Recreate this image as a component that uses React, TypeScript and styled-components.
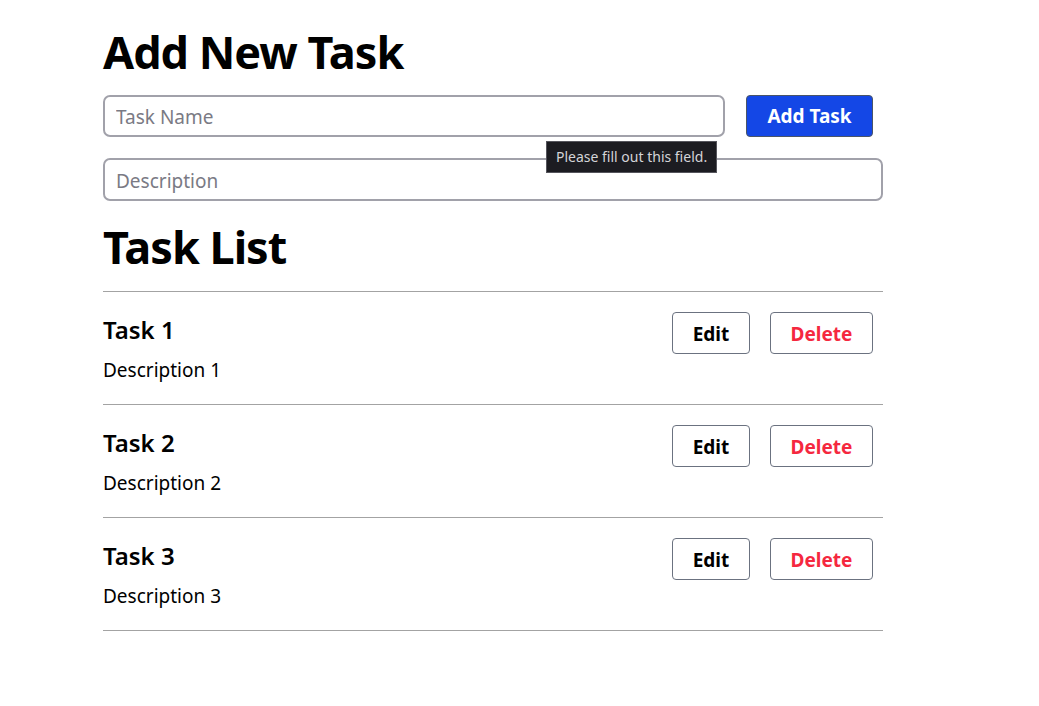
import React from "react";
import styled, { createGlobalStyle } from "styled-components";

const Global = createGlobalStyle`
  html, body { margin: 0; padding: 0; background: #fff; }
  body { font-family: "Noto Sans", "Open Sans", sans-serif; color: #000; }
  * { box-sizing: border-box; }
`;

const Page = styled.div`
  padding: 20px 0 0 103px;
`;

const Container = styled.div`
  width: 780px;
`;

const Heading = styled.h1`
  margin: 0;
  font-size: 45px;
  font-weight: 700;
  letter-spacing: -1px;
  line-height: 64px;
`;

const Form = styled.form`
  display: flex;
  flex-direction: column;
  gap: 21px;
  margin-top: 11px;
  position: relative;
`;

const Row = styled.div`
  display: flex;
  align-items: center;
  gap: 21px;
`;

const Input = styled.input<{ $full?: boolean }>`
  height: ${(p) => (p.$full ? 43 : 42)}px;
  width: ${(p) => (p.$full ? "780px" : "622px")};
  border: 2px solid #a1a1aa;
  border-radius: 7px;
  padding: 2px 11px 0 11px;
  font-family: inherit;
  font-size: 19px;
  color: #000;
  outline: none;
  &::placeholder { color: #7a7a84; }
`;

const PrimaryButton = styled.button`
  height: 42px;
  width: 127px;
  background: #1447e6;
  color: #fff;
  border: 1px solid #4a5568;
  border-radius: 4px;
  font-family: inherit;
  font-size: 19px;
  font-weight: 700;
  cursor: pointer;
`;

const Bubble = styled.div`
  position: absolute;
  left: 443px;
  top: 46px;
  background: #1c1c21;
  color: #d4d4d8;
  border: 1px solid #55555c;
  font-size: 14px;
  padding: 5px 9px 6px 9px;
  white-space: nowrap;
`;

const ListHeading = styled(Heading)`
  margin-top: 14px;
`;

const List = styled.ul`
  list-style: none;
  margin: 12px 0 0 0;
  padding: 0;
  border-top: 1px solid #a3a3a3;
`;

const Item = styled.li`
  display: flex;
  justify-content: space-between;
  align-items: flex-start;
  height: 113px;
  padding: 20px 10px 0 0;
  border-bottom: 1px solid #a3a3a3;
`;

const Info = styled.div`
  display: flex;
  flex-direction: column;
`;

const Title = styled.h3`
  margin: 3px 0 0 0;
  font-size: 24px;
  font-weight: 600;
  line-height: 30px;
`;

const Desc = styled.p`
  margin: 13px 0 0 0;
  font-size: 19px;
  line-height: 24px;
`;

const Actions = styled.div`
  display: flex;
  gap: 20px;
`;

const ActionButton = styled.button<{ $danger?: boolean }>`
  height: 42px;
  width: ${(p) => (p.$danger ? 103 : 78)}px;
  padding: 2px 0 0 0;
  background: #fff;
  color: ${(p) => (p.$danger ? "#f5283f" : "#000")};
  border: 1px solid #6b7280;
  border-radius: 4px;
  font-family: inherit;
  font-size: 19px;
  font-weight: 700;
  cursor: pointer;
`;

const tasks = [
  { id: 1, name: "Task 1", desc: "Description 1" },
  { id: 2, name: "Task 2", desc: "Description 2" },
  { id: 3, name: "Task 3", desc: "Description 3" },
];

export default function App() {
  return (
    <Page>
      <Global />
      <Container>
        <Heading>Add New Task</Heading>
        <Form onSubmit={(e) => e.preventDefault()}>
          <Row>
            <Input placeholder="Task Name" />
            <PrimaryButton type="submit">Add Task</PrimaryButton>
          </Row>
          <Input $full placeholder="Description" />
          <Bubble>Please fill out this field.</Bubble>
        </Form>
        <ListHeading>Task List</ListHeading>
        <List>
          {tasks.map((t) => (
            <Item key={t.id}>
              <Info>
                <Title>{t.name}</Title>
                <Desc>{t.desc}</Desc>
              </Info>
              <Actions>
                <ActionButton>Edit</ActionButton>
                <ActionButton $danger>Delete</ActionButton>
              </Actions>
            </Item>
          ))}
        </List>
      </Container>
    </Page>
  );
}
